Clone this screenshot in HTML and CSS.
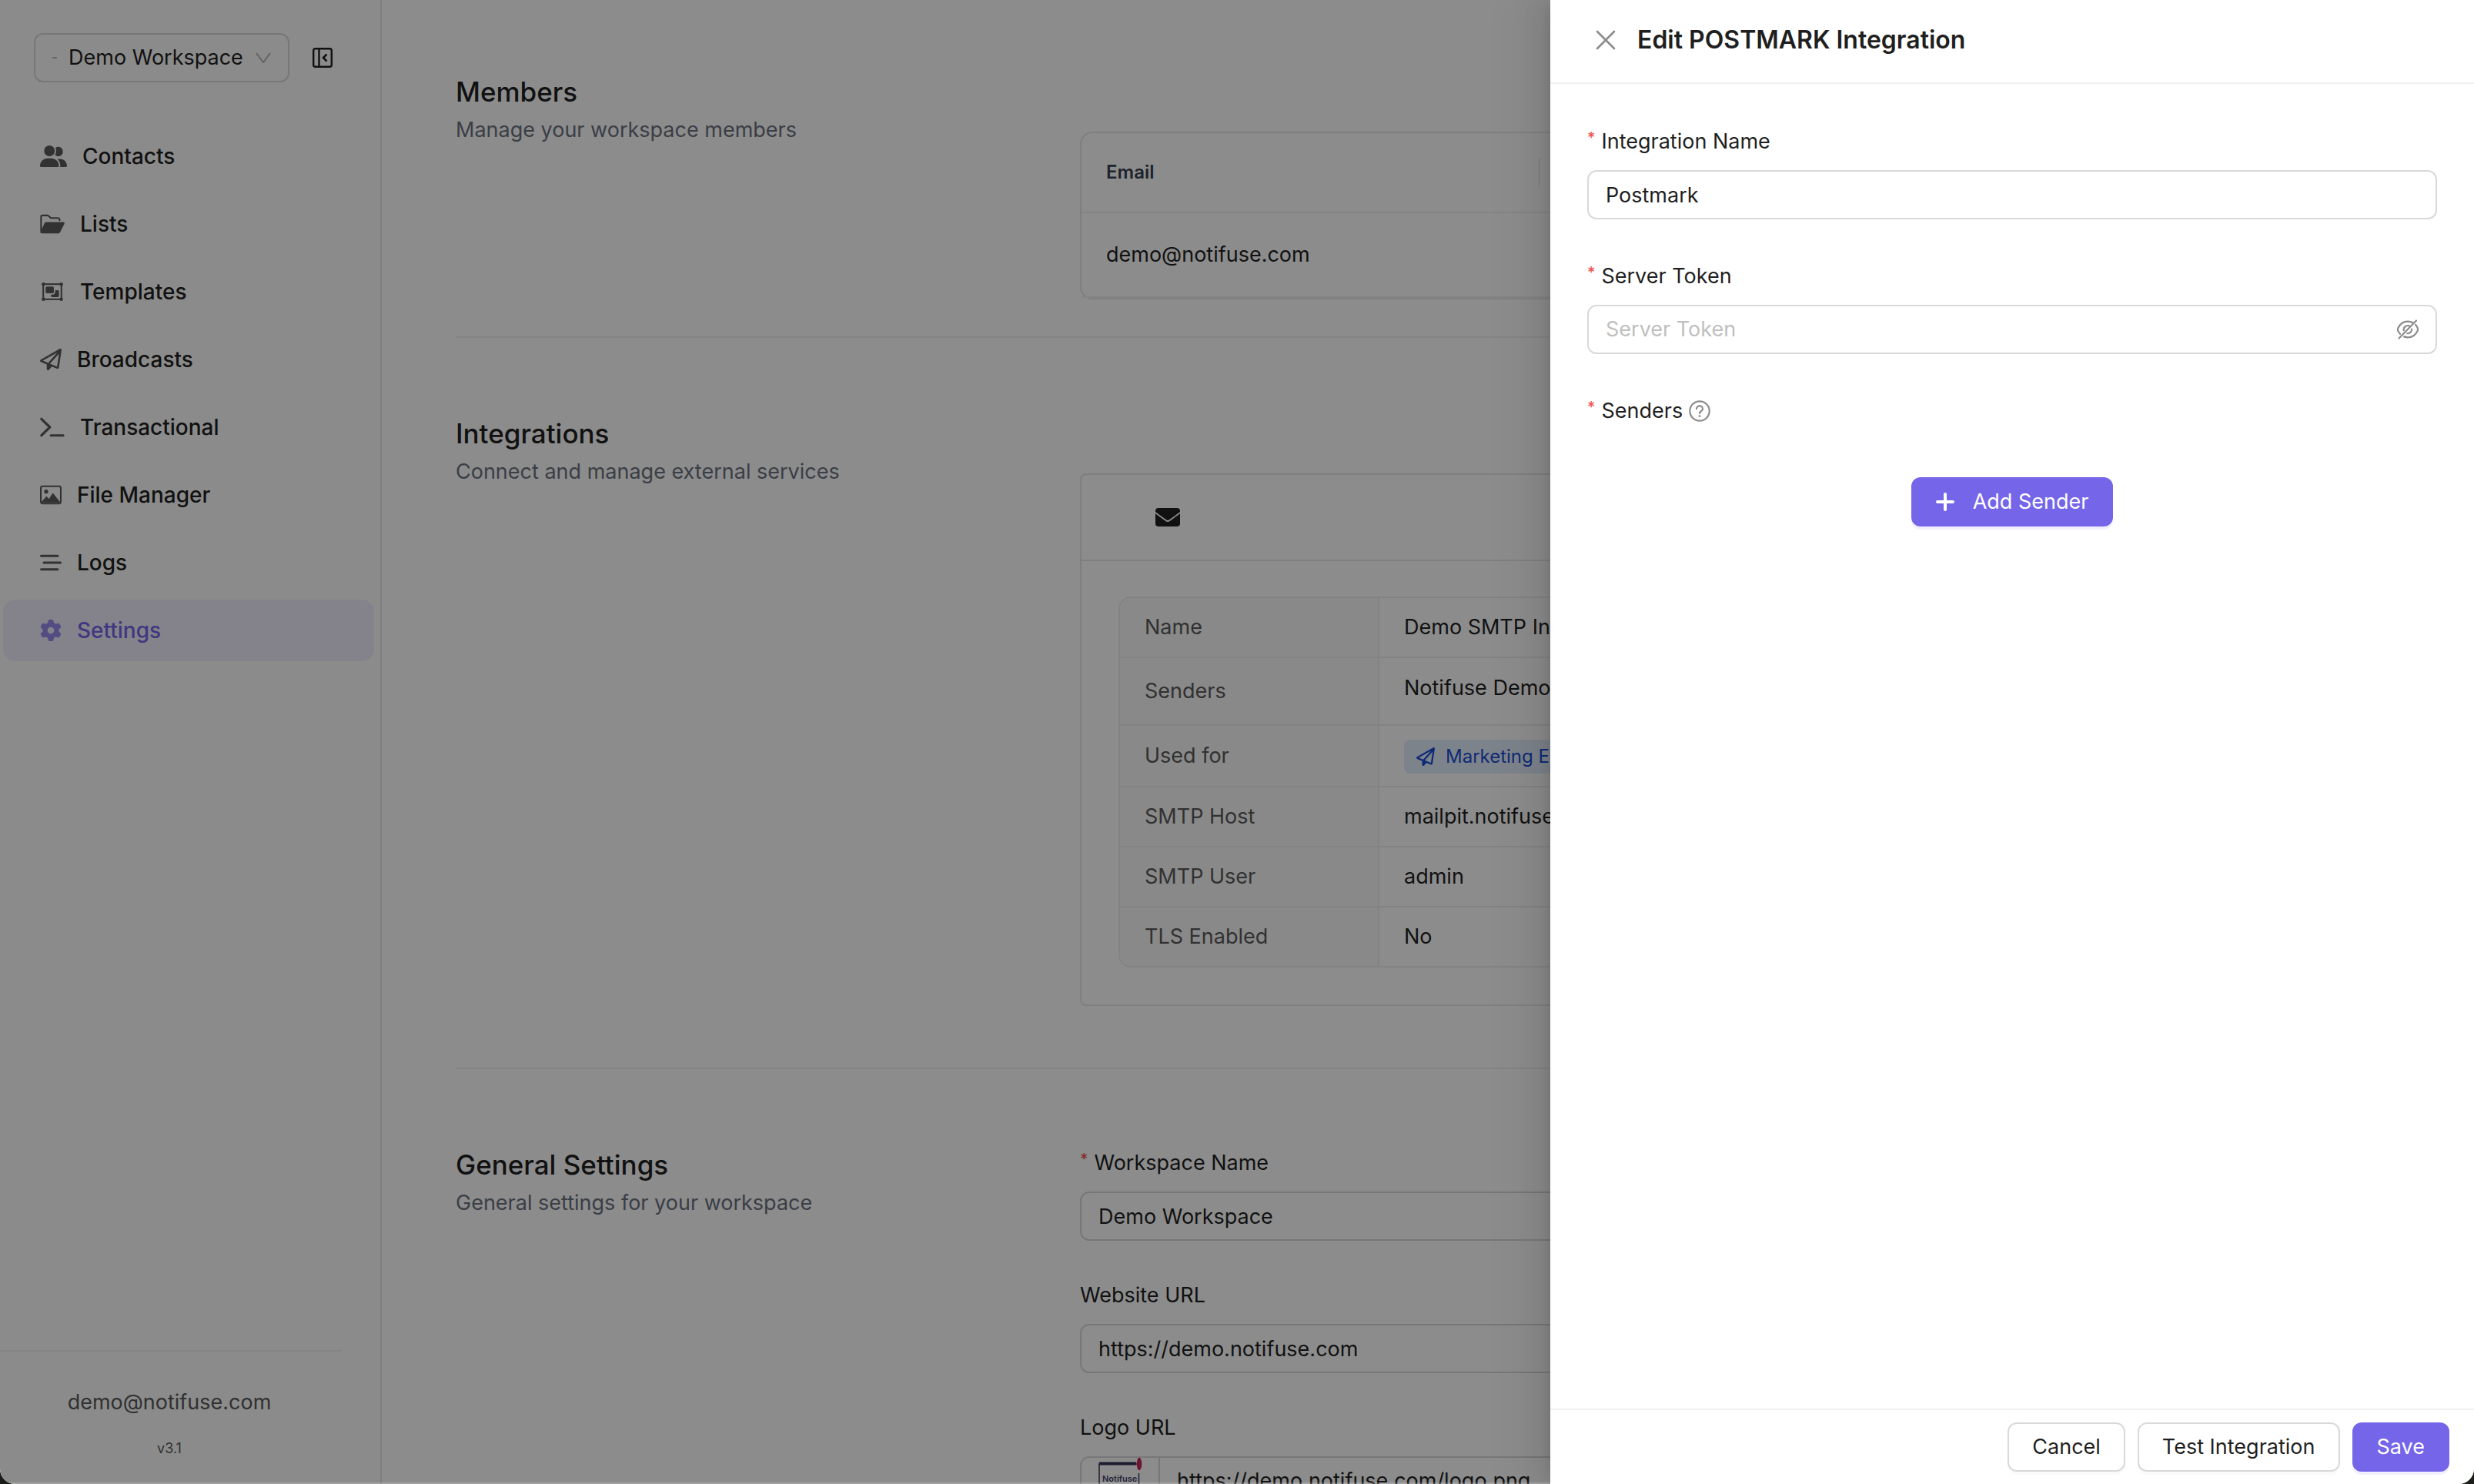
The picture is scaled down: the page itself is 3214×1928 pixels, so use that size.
FILE: index.html
```html
<!DOCTYPE html>
<html lang="en">
<head>
  <meta charset="UTF-8">
  <meta name="viewport" content="width=device-width, initial-scale=1.0">
  <title>Notifuse - Settings</title>
  <link rel="stylesheet" href="styles.css">
</head>
<body>
  <!-- shared icon shapes -->
  <svg class="sprite" aria-hidden="true">
    <symbol id="plane" viewBox="0 0 512 512">
      <path fill="currentColor" d="M16.1 260.2c-22.6 12.9-20.5 47.3 3.6 57.3L160 376V479.3c0 18.1 14.6 32.7 32.7 32.7c9.7 0 18.9-4.3 25.1-11.8l62-74.3 123.9 51.6c18.9 7.9 40.8-4.5 43.9-24.7l64-416c1.9-12.1-3.4-24.3-13.5-31.2s-23.3-7.5-34-1.4l-448 256zm52.1 25.5L409.7 90.6 190.1 336l1.2 1L68.2 285.7zM403.3 425.4L236.7 355.9 450.8 116.6 403.3 425.4z"/>
    </symbol>
  </svg>

  <div class="app">
    <aside class="sidebar">
      <div class="workspace">
        <div class="workspace-select">
          <span class="workspace-logo"></span>
          <select aria-label="Workspace">
            <option>Demo Workspace</option>
          </select>
          <svg class="chevron" viewBox="0 0 20 14" fill="none" stroke="currentColor" stroke-width="2"><path d="M1 1l9 12 9-12"/></svg>
        </div>
        <button class="collapse" type="button" aria-label="Collapse menu">
          <svg width="26" height="26" viewBox="0 0 26 26" fill="none" stroke="currentColor">
            <rect x="1.2" y="1.2" width="23.6" height="23.6" rx="2.5" stroke-width="2.4"/>
            <path d="M8.5 1v24" stroke-width="2.4"/>
            <path d="M18.5 8.5L14 13l4.5 4.5" stroke-width="2.6"/>
          </svg>
        </button>
      </div>

      <nav class="menu">
        <a href="#contacts">
          <svg class="icon wider" viewBox="0 0 640 512" fill="currentColor"><path d="M96 128a128 128 0 1 1 256 0A128 128 0 1 1 96 128zM0 482.3C0 383.8 79.8 304 178.3 304h91.4C368.2 304 448 383.8 448 482.3c0 16.4-13.3 29.7-29.7 29.7H29.7C13.3 512 0 498.7 0 482.3zM609.3 512H471.4c5.4-9.4 8.6-20.3 8.6-32v-8c0-60.7-27.1-115.2-69.8-151.8c2.4-.1 4.7-.2 7.1-.2h61.4C567.8 320 640 392.2 640 481.3c0 17-13.8 30.7-30.7 30.7zM432 256c-31 0-59-12.6-79.3-32.9C372.4 196.5 384 163.6 384 128c0-26.8-6.6-52.1-18.3-74.3C384.3 40.1 407.2 32 432 32c61.9 0 112 50.1 112 112s-50.1 112-112 112z"/></svg>
          Contacts
        </a>
        <a href="#lists">
          <svg class="icon wide" viewBox="0 0 576 512" fill="none">
            <path d="M20 430V84c0-20 12-32 32-32h116c12 0 22 4 30 12l38 38c8 8 18 12 30 12h152c26 0 42 16 42 42v28" stroke="currentColor" stroke-width="38"/>
            <path d="M146 208h398c26 0 40 24 28 46L474 448c-10 20-26 32-48 32H44c-30 0-44-14-44-40l16-14 88-192c8-18 22-26 42-26z" fill="currentColor"/>
          </svg>
          Lists
        </a>
        <a href="#templates">
          <svg class="icon wide" viewBox="0 0 576 512" fill="currentColor">
            <rect x="72" y="76" width="432" height="360" fill="none" stroke="currentColor" stroke-width="38"/>
            <circle cx="76" cy="78" r="42"/><circle cx="500" cy="78" r="42"/><circle cx="76" cy="434" r="42"/><circle cx="500" cy="434" r="42"/>
            <rect x="128" y="132" width="196" height="162" rx="32"/>
            <path d="M356 220h58c18 0 32 14 32 32v100c0 18-14 32-32 32H288c-18 0-32-14-32-32v-26h36c36 0 64-28 64-64z"/>
          </svg>
          Templates
        </a>
        <a href="#broadcasts">
          <svg class="icon"><use href="#plane"/></svg>
          Broadcasts
        </a>
        <a href="#transactional">
          <svg class="icon wide" viewBox="0 0 576 512" fill="none" stroke="currentColor" stroke-width="58" stroke-linecap="round" stroke-linejoin="round"><path d="M29 60l200 196L29 452M254 452h292"/></svg>
          Transactional
        </a>
        <a href="#files">
          <svg class="icon" viewBox="0 0 512 512" fill="currentColor">
            <rect x="19" y="51" width="474" height="410" rx="44" fill="none" stroke="currentColor" stroke-width="38"/>
            <circle cx="146" cy="176" r="48"/>
            <path d="M40 440v-24l100-116c8-10 20-10 28 0l42 50 80-120c8-12 24-12 32 0l150 190v20z"/>
          </svg>
          File Manager
        </a>
        <a href="#logs">
          <svg class="icon" viewBox="0 0 512 512" stroke="currentColor" stroke-width="58" stroke-linecap="round"><path d="M29 96h390M93 256h390M29 416h390"/></svg>
          Logs
        </a>
        <a class="active" href="#settings">
          <svg class="icon" viewBox="0 0 512 512" fill="currentColor"><path d="M495.9 166.6c3.2 8.7 .5 18.4-6.4 24.6l-43.3 39.4c1.1 8.3 1.7 16.8 1.7 25.4s-.6 17.1-1.7 25.4l43.3 39.4c6.9 6.2 9.6 15.9 6.4 24.6c-4.4 11.9-9.7 23.3-15.8 34.3l-4.7 8.1c-6.6 11-14 21.4-22.1 31.2c-5.9 7.2-15.7 9.6-24.5 6.8l-55.7-17.7c-13.4 10.3-28.2 18.9-44 25.4l-12.5 57.1c-2 9.1-9 16.3-18.2 17.8c-13.8 2.3-28 3.5-42.5 3.5s-28.7-1.2-42.5-3.5c-9.2-1.5-16.2-8.7-18.2-17.8l-12.5-57.1c-15.8-6.5-30.6-15.1-44-25.4L83.1 425.9c-8.8 2.8-18.6 .3-24.5-6.8c-8.1-9.8-15.5-20.2-22.1-31.2l-4.7-8.1c-6.1-11-11.4-22.4-15.8-34.3c-3.2-8.7-.5-18.4 6.4-24.6l43.3-39.4C64.6 273.1 64 264.6 64 256s.6-17.1 1.7-25.4L22.4 191.2c-6.9-6.2-9.6-15.9-6.4-24.6c4.4-11.9 9.7-23.3 15.8-34.3l4.7-8.1c6.6-11 14-21.4 22.1-31.2c5.9-7.2 15.7-9.6 24.5-6.8l55.7 17.7c13.4-10.3 28.2-18.9 44-25.4l12.5-57.1c2-9.1 9-16.3 18.2-17.8C227.3 1.2 241.5 0 256 0s28.7 1.2 42.5 3.5c9.2 1.5 16.2 8.7 18.2 17.8l12.5 57.1c15.8 6.5 30.6 15.1 44 25.4l55.7-17.7c8.8-2.8 18.6-.3 24.5 6.8c8.1 9.8 15.5 20.2 22.1 31.2l4.7 8.1c6.1 11 11.4 22.4 15.8 34.3zM256 336a80 80 0 1 0 0-160 80 80 0 1 0 0 160z"/></svg>
          Settings
        </a>
      </nav>

      <div class="account">
        <div class="account-email">demo@notifuse.com</div>
        <div class="account-version">v3.1</div>
      </div>
    </aside>

    <main class="content">
      <section class="section">
        <div>
          <h2>Members</h2>
          <p>Manage your workspace members</p>
        </div>
        <table class="members">
          <thead>
            <tr><th>Email</th><th></th></tr>
          </thead>
          <tbody>
            <tr><td>demo@notifuse.com</td><td></td></tr>
          </tbody>
        </table>
      </section>

      <section class="section">
        <div>
          <h2>Integrations</h2>
          <p>Connect and manage external services</p>
        </div>
        <div class="card">
          <div class="card-head">
            <svg width="32" height="24" viewBox="0 0 32 24"><rect width="32" height="24" rx="4" fill="currentColor"/><path d="M-1 5.5l14.500 10.500q2.500 2 5 0L33 5.500" fill="none" stroke="#fff" stroke-width="1.800"/></svg>
          </div>
          <div class="card-body">
            <table class="details">
              <tr><th>Name</th><td>Demo SMTP Integration</td></tr>
              <tr class="senders"><th>Senders</th><td>Notifuse Demo</td></tr>
              <tr class="used"><th>Used for</th><td><span class="tag"><svg width="24" height="24"><use href="#plane"/></svg>Marketing Emails</span></td></tr>
              <tr><th>SMTP Host</th><td>mailpit.notifuse.com</td></tr>
              <tr><th>SMTP User</th><td>admin</td></tr>
              <tr><th>TLS Enabled</th><td>No</td></tr>
            </table>
          </div>
        </div>
      </section>

      <section class="section">
        <div>
          <h2>General Settings</h2>
          <p>General settings for your workspace</p>
        </div>
        <form class="general">
          <div class="field">
            <label class="required" for="workspaceName">Workspace Name</label>
            <input class="input" type="text" id="workspaceName" value="Demo Workspace">
          </div>
          <div class="field">
            <label for="websiteUrl">Website URL</label>
            <input class="input" type="text" id="websiteUrl" value="https://demo.notifuse.com">
          </div>
          <div class="field">
            <label for="logoUrl">Logo URL</label>
            <div class="input logo-input">
              <span class="logo-preview">
                <svg width="58" height="60" viewBox="0 0 58 60">
                  <path d="M1 60V8h49" fill="none" stroke="#33365a" stroke-width="1.500"/>
                  <path d="M1 7.500h48" stroke="#33365a" stroke-width="4"/>
                  <path d="M52.500 20v40" stroke="#33365a" stroke-width="1.500"/>
                  <ellipse cx="53" cy="8" rx="3.300" ry="8.300" fill="#c8265c"/>
                  <text x="5" y="31" font-size="11" font-weight="600" fill="#43466e">Notifuse</text>
                </svg>
              </span>
              <input type="text" id="logoUrl" value="https://demo.notifuse.com/logo.png">
            </div>
          </div>
        </form>
      </section>
    </main>

    <div class="mask"></div>

    <div class="drawer" role="dialog" aria-labelledby="drawerTitle">
      <header class="drawer-head">
        <button class="close" type="button" aria-label="Close">
          <svg width="26" height="26" viewBox="0 0 26 26" stroke="currentColor" stroke-width="2.600" stroke-linecap="round"><path d="M2 2l22 22M24 2L2 24"/></svg>
        </button>
        <h1 id="drawerTitle">Edit POSTMARK Integration</h1>
      </header>

      <form class="drawer-body">
        <div class="field">
          <label class="required" for="integrationName">Integration Name</label>
          <input class="input" type="text" id="integrationName" value="Postmark">
        </div>
        <div class="field">
          <label class="required" for="serverToken">Server Token</label>
          <div class="input password">
            <input type="password" id="serverToken" placeholder="Server Token">
            <button type="button" aria-label="Show token">
              <svg width="28" height="28" viewBox="0 0 28 28" fill="none" stroke="currentColor" stroke-width="2.200" stroke-linecap="round">
                <path d="M21 5.500C19 4.300 16.700 3.700 14 3.700 8.500 3.700 4 6.700 1.300 12.300q-.8 1.700 0 3.400C2 17.200 3 18.600 4 19.800"/>
                <path d="M24 7.800c1 1.200 2 2.700 2.700 4.200q.8 2 0 3.700C24 21.300 19.500 24.300 14 24.300c-1.800 0-3.400-.3-5-.9"/>
                <path d="M17 10c-3.500-2.400-9 0-8.300 5.200M19 13.500c.6 3.600-2.600 6-5.800 5.500"/>
                <path d="M25 2.500L2.500 25.500"/>
              </svg>
            </button>
          </div>
        </div>
        <div class="field">
          <label class="required" for="addSender">Senders
            <svg class="help" width="28" height="28" viewBox="0 0 28 28" fill="none" stroke="currentColor" stroke-width="2.200"><circle cx="14" cy="14" r="12.700"/><path d="M10 11.200c0-5.200 8-5.200 8 0 0 2.900-4 2.700-4 5.900" stroke-linecap="round"/><circle cx="14" cy="20.600" r="1.400" fill="currentColor" stroke="none"/></svg>
          </label>
          <button class="btn primary add" type="button" id="addSender">
            <svg width="24" height="24" viewBox="0 0 24 24" stroke="currentColor" stroke-width="4" stroke-linecap="round"><path d="M12 2v20M2 12h20"/></svg>
            Add Sender
          </button>
        </div>
      </form>

      <footer class="drawer-foot">
        <button class="btn" type="button">Cancel</button>
        <button class="btn" type="button">Test Integration</button>
        <button class="btn primary" type="button">Save</button>
      </footer>
    </div>
  </div>
</body>
</html>
```
FILE: styles.css
```css
* {
  box-sizing: border-box;
}
body {
  margin: 0;
  background: #1c1e1c;
  color: #1f1f1f;
  font-family: Inter, "Liberation Sans", sans-serif;
  font-size: 27px;
  line-height: 44px;
}
h1, h2, p {
  margin: 0;
}
svg {
  display: block;
  flex-shrink: 0;
}
button, input, select {
  font: inherit;
  color: inherit;
}
button {
  cursor: pointer;
}
table {
  width: 100%;
  border-spacing: 0;
}
.sprite {
  position: absolute;
  width: 0;
  height: 0;
}
.app {
  position: relative;
  display: flex;
  height: 100vh;
  overflow: hidden;
  background: #fff;
  border-radius: 0 0 20px 20px;
}

/* sidebar */
.sidebar {
  display: flex;
  flex-direction: column;
  flex-shrink: 0;
  width: 496px;
  background: #fdfdfd;
  border-right: 2px solid #e8e8e8;
}
.workspace {
  display: flex;
  align-items: center;
  gap: 30px;
  padding: 43px 44px 52px;
}
.workspace-select {
  display: flex;
  align-items: center;
  width: 332px;
  height: 64px;
  padding: 0 22px;
  border: 2px solid #d9d9d9;
  border-radius: 12px;
}
.workspace-logo {
  width: 6px;
  height: 2px;
  margin-right: 15px;
  background: #bbb;
}
.workspace-select select {
  flex: 1;
  min-width: 0;
  padding: 0;
  border: none;
  background: none;
  appearance: none;
}
.chevron {
  width: 20px;
  height: 14px;
  color: #b5b5b5;
}
.collapse {
  padding: 0;
  border: none;
  background: none;
}
.menu {
  display: flex;
  flex-direction: column;
  gap: 8px;
  padding: 4px 8px 4px 4px;
}
.menu a {
  display: flex;
  align-items: center;
  gap: 20px;
  height: 80px;
  padding: 0 48px;
  border-radius: 16px;
  color: inherit;
  font-size: 28px;
  font-weight: 500;
  text-decoration: none;
}
.menu .active {
  background: #f0edfc;
  color: #7565e9;
}
.icon {
  width: 28px;
  height: 28px;
  opacity: 0.72;
}
.wide {
  width: 32px;
}
.wider {
  width: 35px;
}
.account {
  display: flex;
  flex-direction: column;
  gap: 24px;
  margin: auto 50px 0 0;
  padding: 44px 4px 32px 0;
  border-top: 2px solid #f0f0f0;
  color: #595959;
  text-align: center;
}
.account-version {
  font-size: 18px;
  line-height: 28px;
}

/* settings page */
.content {
  flex: 1;
  min-width: 0;
  padding: 91px 96px 0;
}
.section {
  display: grid;
  grid-template-columns: 779px minmax(0, 1fr);
  gap: 32px;
}
.section + .section {
  margin-top: 48px;
  padding-top: 96px;
  border-top: 2px solid #f0f0f0;
}
.section h2 {
  font-size: 35px;
  font-weight: 500;
  line-height: 56px;
}
.section p {
  color: #6b7280;
}
.members {
  margin-top: 80px;
  border: 2px solid #e8e8e8;
  border-radius: 16px;
}
.members th,
.members td {
  padding: 0 32px;
  border-bottom: 2px solid #f0f0f0;
  text-align: left;
}
.members th {
  height: 104px;
  color: #374151;
  font-size: 24px;
  font-weight: 600;
}
.members th:first-child {
  width: 596px;
  background: linear-gradient(#ebebeb, #ebebeb) right center / 2px 38px no-repeat;
}
.members td {
  height: 110px;
}
.card {
  margin: 80px 0 32px;
  border: 2px solid #e8e8e8;
  border-radius: 8px;
}
.card-head {
  display: flex;
  align-items: center;
  height: 112px;
  padding: 0 96px;
  border-bottom: 2px solid #e8e8e8;
}
.card-body {
  padding: 46px 48px 48px;
}
.details {
  border: 2px solid #eee;
  border-radius: 16px;
  overflow: hidden;
  table-layout: fixed;
}
.details th,
.details td {
  height: 78px;
  padding: 0 32px;
  border-bottom: 2px solid #eee;
  text-align: left;
}
.details th {
  width: 337px;
  border-right: 2px solid #eee;
  background: #fafafa;
  color: #595959;
  font-weight: 400;
}
.details tr:last-child > * {
  height: 76px;
  border-bottom: none;
}
.details .senders > * {
  height: 88px;
}
.details .senders td {
  padding-bottom: 8px;
}
.details .used > * {
  height: 80px;
}
.tag {
  display: inline-flex;
  align-items: center;
  gap: 14px;
  height: 44px;
  padding: 0 16px;
  border-radius: 8px;
  background: #e3effd;
  color: #1d4ed8;
  font-size: 24px;
  vertical-align: middle;
}

/* form fields */
.general {
  padding-top: 1px;
}
.field {
  display: flex;
  flex-direction: column;
  margin-bottom: 46px;
}
.field label {
  display: flex;
  align-items: center;
  align-self: flex-start;
  gap: 8px;
  height: 50px;
  margin-bottom: 12px;
}
.required::before {
  content: "*";
  align-self: flex-start;
  color: #f0524f;
  font-size: 20px;
  font-weight: 500;
  line-height: 40px;
}
.input {
  width: 100%;
  height: 64px;
  padding: 0 22px;
  border: 2px solid #d9d9d9;
  border-radius: 12px;
  background: #fff;
}
.input input {
  flex: 1;
  min-width: 0;
  padding: 0;
  border: none;
  background: none;
  outline: none;
}
.input input::placeholder {
  color: #bfbfbf;
}
.logo-input {
  display: flex;
  align-items: center;
}
.logo-preview {
  align-self: stretch;
  width: 80px;
  margin-right: 22px;
  border-right: 2px solid #d9d9d9;
}
.password {
  display: flex;
  align-items: center;
}
.password button {
  padding: 0;
  border: none;
  background: none;
  color: #8c8c8c;
}

/* drawer over the page */
.mask {
  position: absolute;
  inset: 0;
  background: rgba(0, 0, 0, 0.45);
  border-bottom: 2px solid rgba(255, 255, 255, 0.2);
}
.drawer {
  position: absolute;
  top: 0;
  right: 0;
  bottom: 0;
  display: flex;
  flex-direction: column;
  width: 1200px;
  max-width: 100%;
  background: #fff;
  box-shadow: -12px 0 32px rgba(0, 0, 0, 0.08), -6px 0 12px -8px rgba(0, 0, 0, 0.12), -18px 0 56px 16px rgba(0, 0, 0, 0.05);
}
.drawer-head {
  display: flex;
  align-items: center;
  gap: 28px;
  padding: 28px 59px 31px;
  border-bottom: 2px solid #f0f0f0;
}
.drawer-head h1 {
  font-size: 32px;
  font-weight: 600;
  line-height: 48px;
}
.close {
  padding: 0;
  border: none;
  background: none;
  color: #8c8c8c;
}
.drawer-body {
  flex: 1;
  padding: 50px 48px;
  overflow: auto;
}
.drawer-body .field {
  margin-bottom: 49px;
}
.help {
  color: #8c8c8c;
}
.drawer-foot {
  display: flex;
  justify-content: flex-end;
  gap: 16px;
  padding: 16px 32px;
  border-top: 2px solid #f0f0f0;
}
.btn {
  display: flex;
  align-items: center;
  justify-content: center;
  height: 64px;
  padding: 0 30px;
  border: 2px solid #d9d9d9;
  border-radius: 12px;
  background: #fff;
  box-shadow: 0 4px 0 rgba(0, 0, 0, 0.02);
}
.primary {
  border-color: #7565e9;
  background: #7565e9;
  color: #fff;
  box-shadow: 0 4px 0 #f2efff;
}
.add {
  align-self: center;
  gap: 24px;
  margin-top: 49px;
}
```
